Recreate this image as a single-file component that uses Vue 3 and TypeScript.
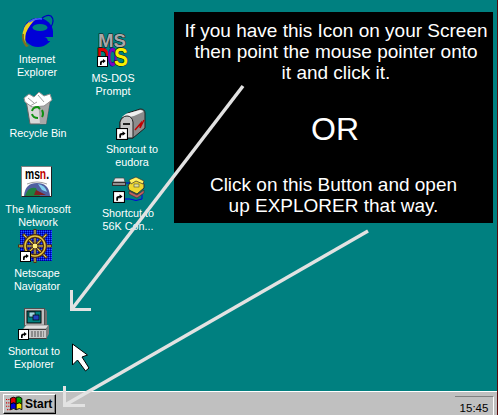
<script setup lang="ts">
interface Label { lines: string[]; cx: number; top: number }
const labels: Label[] = [
  { lines: ['Internet', 'Explorer'], cx: 37, top: 53 },
  { lines: ['Recycle Bin'], cx: 38, top: 127 },
  { lines: ['The Microsoft', 'Network'], cx: 38, top: 203 },
  { lines: ['Netscape', 'Navigator'], cx: 37, top: 267 },
  { lines: ['Shortcut to', 'Explorer'], cx: 34, top: 345 },
  { lines: ['MS-DOS', 'Prompt'], cx: 113, top: 72 },
  { lines: ['Shortcut to', 'eudora'], cx: 132, top: 143 },
  { lines: ['Shortcut to', '56K Con...'], cx: 128, top: 207 },
]
const spokes = [0, 45, 90, 135]
</script>

<template>
  <div class="screen">
    <main class="desktop">
      <svg class="art" width="498" height="392" viewBox="0 0 498 392">
        <defs>
          <pattern id="dither" width="2" height="2" patternUnits="userSpaceOnUse">
            <rect width="2" height="2" fill="#0018e0" />
            <rect width="1" height="1" fill="#000090" />
            <rect x="1" y="1" width="1" height="1" fill="#3060ff" />
          </pattern>
          <symbol id="badge" viewBox="0 0 11 11">
            <rect x="0.5" y="0.5" width="10" height="10" fill="#fff" stroke="#000" />
            <path d="M3 9 V6.5 Q3 4.5 5.5 4.5 H6 V3 L8.8 5 L6 7.2 V6 Q4.5 6 4.6 9 Z" fill="#000" />
          </symbol>
        </defs>

        <!-- Internet Explorer -->
        <g>
          <path d="M41 19 Q47 14 51 16 Q55 20 51 27" fill="none" stroke="#0000c0" stroke-width="1.2" />
          <ellipse cx="38" cy="32.5" rx="15" ry="14.5" fill="#0000d8" />
          <path d="M24 28 Q27 21 37 18 Q29 25 26 33 Q24 40 27 46 Q20 38 24 28 Z" fill="#e8d020" />
          <path d="M24 34 Q23 42 29 46 L26 47 Q21 41 22 34 Z" fill="#807020" />
          <ellipse cx="40" cy="27.5" rx="7.5" ry="3.6" fill="#008080" />
          <path d="M33 37 H54 V41 H48 Q47 37 44 37 Z" fill="#008080" />
          <rect x="30" y="31" width="23" height="6" fill="#0000d8" />
          <path d="M29 22 Q36 18 42 19" fill="none" stroke="#4060ff" stroke-width="1.5" />
        </g>

        <!-- Recycle Bin -->
        <g>
          <path d="M26 100 L30 124 H46 L50 100 Z" fill="#d8d8d8" stroke="#606060" />
          <path d="M38 100 H50 L46 124 H40 Z" fill="#a8a8a8" />
          <path d="M24 98 L29 94 L34 97 L39 92 L44 96 L50 94 L52 100 L44 106 L32 107 L25 102 Z" fill="#fff" stroke="#909090" />
          <path d="M30 106 L37 102 M38 95 L44 102 M28 98 L34 103" stroke="#a0a0a0" fill="none" />
          <g fill="none" stroke="#109010" stroke-width="2">
            <path d="M32 111 Q33 107 38 107 L40 109" />
            <path d="M42 110 Q44 114 42 117" />
            <path d="M32 114 Q33 118 38 118" />
          </g>
        </g>

        <!-- The Microsoft Network -->
        <g>
          <rect x="21.5" y="166.5" width="30" height="30" fill="#fff" stroke="#808080" />
          <path d="M51.5 166.5 V196.5 H21.5" fill="none" stroke="#202020" />
          <text x="25" y="179" class="msn" textLength="24" lengthAdjust="spacingAndGlyphs">ms<tspan fill="#c00000">n</tspan>.</text>
          <path d="M24 196 Q25 183 37 183 Q49 183 50 196 Z" fill="#5060a0" />
          <path d="M25 196 Q28 186 36 188 L40 196 Z" fill="#208040" />
          <path d="M38 184 Q45 185 47 192 L42 190 Z" fill="#80d0f0" />
          <path d="M36 190 L46 195 H34 Z" fill="#802020" />
          <path d="M27 184 Q37 180 47 184" fill="none" stroke="#a0a0a0" />
        </g>

        <!-- Netscape Navigator -->
        <g>
          <rect x="20" y="230" width="32" height="31" fill="url(#dither)" />
          <g transform="translate(35 246)">
            <g v-for="a in spokes" :key="a" :transform="`rotate(${a})`">
              <line x1="-17" x2="17" y1="0" y2="0" stroke="#503010" stroke-width="3" />
              <line x1="-16" x2="16" y1="0" y2="0" stroke="#f0e060" stroke-width="1" />
            </g>
            <circle r="10" fill="none" stroke="#503010" stroke-width="4" />
            <circle r="10" fill="none" stroke="#e8c840" stroke-width="1.5" />
            <circle r="3" fill="#fff080" stroke="#503010" />
          </g>
          <use href="#badge" x="20" y="251" width="11" height="11" />
        </g>

        <!-- Shortcut to Explorer -->
        <g>
          <rect x="24.5" y="308.5" width="20" height="17" fill="#c0c0c0" stroke="#505050" />
          <rect x="27" y="311" width="14" height="12" fill="#008080" stroke="#000" />
          <rect x="29" y="312" width="6" height="5" fill="#a0d8e0" stroke="#000" stroke-width="0.7" />
          <rect x="33" y="315" width="6" height="5" fill="#2040c0" stroke="#000" stroke-width="0.7" />
          <path d="M45 309 L47 311 V326 H45 Z" fill="#707070" />
          <path d="M23 329 L26 325 H49 L46 329 Z" fill="#e0e0e0" stroke="#606060" stroke-width="0.6" />
          <rect x="23.5" y="329.5" width="23" height="9" fill="#c8c8c8" stroke="#404040" />
          <path d="M46 329 L49 325 V334 L46 339 Z" fill="#808080" />
          <path d="M31 332 H44 M31 334 H44 M31 336 H44" stroke="#505050" stroke-dasharray="2 1" />
          <use href="#badge" x="18" y="329" width="11" height="11" />
        </g>

        <!-- MS-DOS Prompt -->
        <g>
          <text x="98" y="47" class="ms" textLength="28" lengthAdjust="spacingAndGlyphs">MS</text>
          <text x="97" y="66" class="dos dos-d" textLength="12" lengthAdjust="spacingAndGlyphs">D</text>
          <text x="108" y="66" class="dos dos-o" textLength="9" lengthAdjust="spacingAndGlyphs">O</text>
          <text x="114" y="66" class="dos dos-s" textLength="14" lengthAdjust="spacingAndGlyphs">S</text>
          <use href="#badge" x="97" y="56" width="11" height="11" />
        </g>

        <!-- Shortcut to eudora -->
        <g>
          <path d="M120 122 Q122 116 128 113 L140 109 Q145 109 145 113 V128 L133 138 H120 Z" fill="#8c8c8c" stroke="#202020" />
          <path d="M122 117 Q126 113 129 113 L140 110 Q143 110 143 112 L134 116 Q131 116 130 118 Z" fill="#f0f0f0" />
          <path d="M120 122 Q122 116 127 116 Q132 116 133 122 V138 H120 Z" fill="#c4c4c4" stroke="#202020" />
          <rect x="123" y="123" width="7" height="2" fill="#202020" />
          <path d="M135 130 L141 123 L140 128 L144 120" fill="none" stroke="#c00000" stroke-width="1.4" />
          <use href="#badge" x="116" y="128" width="12" height="12" />
        </g>

        <!-- Shortcut to 56K Connection -->
        <g>
          <path d="M113 182 L115 178 H124 L125 182 Z" fill="#e0e0e0" stroke="#404040" stroke-width="0.7" />
          <rect x="112.5" y="182.5" width="13" height="3" fill="#909090" stroke="#303030" />
          <path d="M126 183 H130 M142 192 L142 199 Q136 202 130 199 L125 199" fill="none" stroke="#0000e0" />
          <path d="M129 190 L137 194 L144 188 V184 L136 179 L131 181 L128 186 Z" fill="#f0d830" stroke="#303030" />
          <path d="M129 180 L136 177 L144 181 L143 184 L136 181 L131 184 Z" fill="#fff060" stroke="#303030" stroke-width="0.7" />
          <rect x="134" y="184" width="5" height="3" fill="#e0e0a0" stroke="#505030" stroke-width="0.6" />
          <path d="M129 191 L137 195 L144 190 V193 L137 198 L129 194 Z" fill="#c06060" stroke="#303030" stroke-width="0.6" />
          <use href="#badge" x="113" y="191" width="12" height="12" />
        </g>
      </svg>

      <template v-for="item in labels" :key="item.lines[0] + item.cx">
        <div class="label" :style="{ left: item.cx - 45 + 'px', top: item.top + 'px' }">
          <span v-for="line in item.lines" :key="line">{{ line }}</span>
        </div>
      </template>

      <section class="callout">
        <div class="upper">
          <p>If you have this Icon on your Screen</p>
          <p>then point the mouse pointer onto</p>
          <p>it and click it.</p>
        </div>
        <p class="or">OR</p>
        <div class="lower">
          <p>Click on this Button and open</p>
          <p>up EXPLORER that way.</p>
        </div>
      </section>
    </main>

    <footer class="taskbar">
      <button class="start" type="button">
        <svg width="17" height="16" viewBox="0 0 15 14">
          <path d="M0 3 H3 M0 6 H4 M0 9 H3 M1 12 H4" stroke="#d00000" stroke-dasharray="1 1" />
          <path d="M4 2 Q7 0 9 2 V7 Q7 5 4 7 Z" fill="#e00000" stroke="#000" stroke-width="0.8" />
          <path d="M9 1 Q12 0 14 2 V7 Q12 5 9 7 Z" fill="#00a000" stroke="#000" stroke-width="0.8" />
          <path d="M4 7 Q7 5 9 7 V12 Q7 10 4 12 Z" fill="#0000e0" stroke="#000" stroke-width="0.8" />
          <path d="M9 7 Q12 5 14 7 V12 Q12 10 9 12 Z" fill="#f0e000" stroke="#000" stroke-width="0.8" />
        </svg>
        <span>Start</span>
      </button>
      <div class="clock">15:45</div>
    </footer>

    <svg class="overlay" width="498" height="415" viewBox="0 0 498 415">
      <g fill="none" stroke="#e2e2e2">
        <line x1="243" y1="86" x2="72" y2="309" stroke-width="3.5" />
        <path d="M71.5 290 V309.5 H91" stroke-width="3" />
        <line x1="368" y1="231" x2="65" y2="405" stroke-width="3.5" />
        <path d="M64.5 386 V405.5 H85" stroke-width="3" />
      </g>
      <path d="M72.5 344 V365 L77.5 360 L85.5 371 L89 368 L82 357 L87.5 355 Z" fill="#fff" stroke="#000" />
    </svg>
  </div>
</template>

<style scoped>
.screen {
  position: relative;
  width: 498px;
  height: 415px;
  display: flex;
  flex-direction: column;
  overflow: hidden;
  background: #008080;
  font-family: "Liberation Sans", Arial, sans-serif;
}
.screen::after {
  content: "";
  position: absolute;
  top: 0;
  right: 0;
  bottom: 0;
  width: 1px;
  background: #5a0a0a;
}
.desktop {
  position: relative;
  flex: 1;
}
.art {
  position: absolute;
  left: 0;
  top: 0;
}
.msn {
  font: bold 15px "Liberation Sans", sans-serif;
  fill: #000;
}
.ms {
  font: bold 18px "Liberation Sans", sans-serif;
  fill: #a8a8a8;
  stroke: #101010;
  stroke-width: 1px;
  paint-order: stroke;
}
.dos {
  font: bold 25px "Liberation Sans", sans-serif;
  stroke: #000;
  stroke-width: 1px;
  paint-order: stroke;
}
.dos-d {
  fill: #e00000;
}
.dos-o {
  fill: #8000c0;
  stroke: #000080;
}
.dos-s {
  fill: #f8f000;
}
.label {
  position: absolute;
  width: 90px;
  display: flex;
  flex-direction: column;
  align-items: center;
  color: #fff;
  font-size: 10.8px;
  line-height: 13px;
  white-space: nowrap;
}
.callout {
  position: absolute;
  left: 174px;
  top: 12px;
  width: 319px;
  height: 211px;
  box-sizing: border-box;
  padding-top: 8px;
  background: #000;
  color: #fff;
  text-align: center;
  font-size: 19px;
  line-height: 21px;
}
.callout p {
  margin: 0;
}
.upper {
  padding-left: 5px;
}
.or {
  margin-top: 28px !important;
  font-size: 32px;
  line-height: 36px;
  padding-left: 3px;
}
.lower {
  margin-top: 27px;
}
.taskbar {
  flex: none;
  height: 24px;
  box-sizing: border-box;
  border-top: 1px solid #fff;
  background: #c0c0c0;
  display: flex;
  align-items: flex-end;
  justify-content: space-between;
  padding: 0 4px 1px 3px;
}
.start {
  height: 20px;
  width: 53px;
  box-sizing: border-box;
  margin: 0;
  padding: 0 0 0 2px;
  display: flex;
  align-items: center;
  gap: 2px;
  background: #c0c0c0;
  border: 1px solid;
  border-color: #fff #000 #000 #fff;
  box-shadow: inset -1px -1px 0 #808080;
  font: bold 12px "Liberation Sans", sans-serif;
  color: #000;
}
.clock {
  width: 39px;
  height: 19px;
  margin-bottom: -1px;
  box-sizing: border-box;
  border-top: 1px solid #808080;
  border-right: 1px solid #fff;
  text-align: center;
  font-size: 11.5px;
  line-height: 22px;
  color: #000;
}
.overlay {
  position: absolute;
  left: 0;
  top: 0;
  pointer-events: none;
}
</style>
